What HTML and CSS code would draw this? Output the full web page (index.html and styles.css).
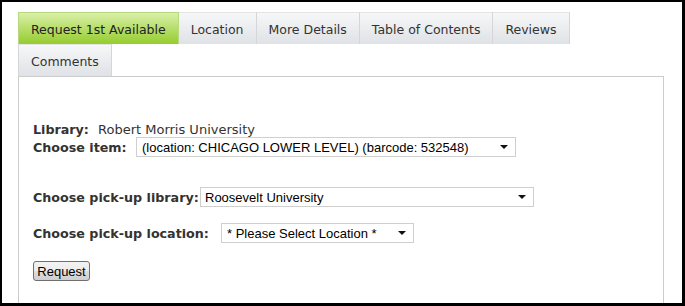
FILE: index.html
```html
<!DOCTYPE html>
<html>
<head>
<meta charset="utf-8">
<link rel="stylesheet" href="styles.css">
</head>
<body>
<div class="frame">
  <div class="tabs">
    <div class="tab active">Request 1st Available</div>
    <div class="tab">Location</div>
    <div class="tab">More Details</div>
    <div class="tab">Table of Contents</div>
    <div class="tab">Reviews</div>
    <div class="tab">Comments</div>
  </div>
  <div class="panel">
    <div class="row lib-row">
      <span class="label lbl-lib">Library:</span>
      <span class="value">Robert Morris University</span>
    </div>
    <div class="row item-row">
      <span class="label lbl-item">Choose item:</span>
      <div class="select sel-item"><span>(location: CHICAGO LOWER LEVEL) (barcode: 532548)</span><i class="arrow"></i></div>
    </div>
    <div class="row pick-lib-row">
      <span class="label lbl-picklib">Choose pick-up library:</span>
      <div class="select sel-picklib"><span>Roosevelt University</span><i class="arrow"></i></div>
    </div>
    <div class="row pick-loc-row">
      <span class="label lbl-pickloc">Choose pick-up location:</span>
      <div class="select sel-pickloc"><span>* Please Select Location *</span><i class="arrow"></i></div>
    </div>
    <div class="row btn-row">
      <button class="btn">Request</button>
    </div>
  </div>
</div>
</body>
</html>
```
FILE: styles.css
```css
* { box-sizing: border-box; }
html, body { margin: 0; padding: 0; background: #fff; }
.frame {
  width: 685px;
  height: 306px;
  border-style: solid;
  border-color: #000;
  border-width: 2px 3px 3px 2px;
  overflow: hidden;
  padding: 10px 18px 0 16px;
  font-family: "DejaVu Sans", Verdana, sans-serif;
  font-size: 12.5px;
  color: #333;
}
.tabs {
  display: flex;
  flex-wrap: wrap;
  width: 600px;
}
.tab {
  height: 32px;
  line-height: 33px;
  padding: 0 12px;
  border: 1px solid #d4d6d8;
  border-top-color: #e4e4e4;
  border-bottom: none;
  border-left: none;
  background: linear-gradient(#f6f7f8, #dfe2e6);
  color: #333;
  white-space: nowrap;
}
.tab:first-child, .tab:last-child { border-left: 1px solid #d4d6d8; }
.tab.active {
  background: linear-gradient(#d9f0a8, #95cc2e);
  border-color: #b8d880;
  color: #222;
}
.panel {
  width: 646px;
  height: 240px;
  border: 1px solid #cccccc;
  border-bottom: none;
  padding: 44px 0 0 14px;
}
.row {
  display: flex;
  align-items: center;
  height: 20px;
}
.lib-row { height: 16px; }
.item-row { margin-top: 0; }
.pick-lib-row { margin-top: 30px; }
.pick-loc-row { margin-top: 16px; }
.btn-row { margin-top: 18px; }
.label { font-weight: bold; white-space: nowrap; flex: none; font-size: 12.7px; }
.lbl-lib { width: 65px; }
.lbl-item { width: 103px; }
.lbl-picklib { width: 167px; }
.lbl-pickloc { width: 188px; }
.value { color: #333; font-size: 13px; }
.select {
  display: flex;
  align-items: center;
  justify-content: space-between;
  height: 20px;
  border: 1px solid #cfcfcf;
  background: #fff;
  padding: 0 7px 0 5px;
  font-family: "Liberation Sans", Arial, sans-serif;
  font-size: 13px;
  color: #000;
  white-space: nowrap;
}
.sel-item { width: 380px; }
.sel-picklib { width: 334px; padding-left: 4px; }
.sel-pickloc { width: 193px; }
.arrow {
  width: 0;
  height: 0;
  border-left: 4px solid transparent;
  border-right: 4px solid transparent;
  border-top: 4px solid #111;
  flex: none;
}
.btn {
  width: 57px;
  height: 20px;
  padding: 0;
  border: 1px solid #707070;
  border-radius: 3px;
  background: linear-gradient(#f3f3f3 0%, #ebebeb 50%, #dddddd 51%, #cfcfcf 100%);
  font-family: "Liberation Sans", Arial, sans-serif;
  font-size: 13px;
  color: #000;
}
```
